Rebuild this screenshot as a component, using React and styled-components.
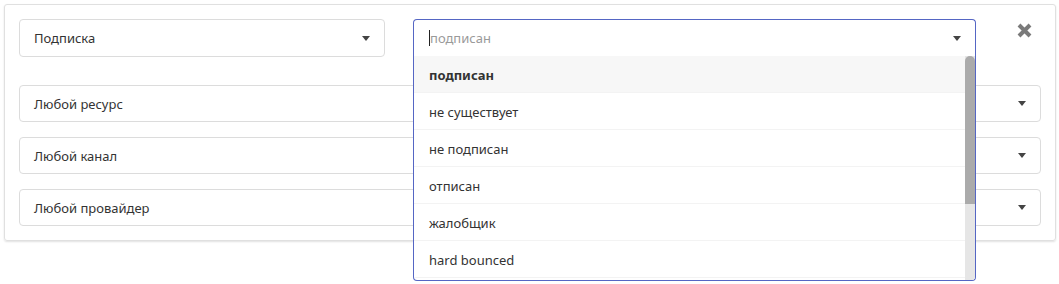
import React from "react";
import styled, { createGlobalStyle } from "styled-components";

const GlobalStyle = createGlobalStyle`
  html, body {
    margin: 0;
    background: #fff;
    font-family: "Noto Sans", "Open Sans", sans-serif;
    color: #333;
  }
`;

const Page = styled.div`
  padding: 4px 3px 0 4px;
  min-height: 284px;
  box-sizing: border-box;
`;

const Card = styled.div`
  border: 1px solid #e0e0e0;
  border-radius: 3px;
  box-shadow: 0 1px 2px rgba(0, 0, 0, 0.12);
  padding: 14px;
  display: flex;
  flex-direction: column;
  gap: 15px;
`;

const TopRow = styled.div`
  display: flex;
  align-items: flex-start;
  margin-bottom: 13px;
`;

const Select = styled.div`
  box-sizing: border-box;
  height: ${(p) => p.h || 38}px;
  width: ${(p) => (p.w ? `${p.w}px` : "auto")};
  flex: none;
  border: 1px solid #dcdcdc;
  border-radius: 4px;
  display: flex;
  align-items: center;
  justify-content: space-between;
  padding: 0 14px;
  font-size: 13px;
  color: #333;
`;

const Arrow = styled.span`
  width: 0;
  height: 0;
  border-left: 4px solid transparent;
  border-right: 4px solid transparent;
  border-top: 5px solid #444;
`;

const Combo = styled.div`
  position: relative;
  width: 563px;
  margin-left: 28px;
  flex: none;
`;

const ComboInput = styled.div`
  box-sizing: border-box;
  height: 37px;
  border: 1px solid #5566c4;
  border-bottom: none;
  border-radius: 4px 4px 0 0;
  display: flex;
  align-items: center;
  justify-content: space-between;
  padding: 0 14px 0 15px;
  font-size: 13px;
`;

const Placeholder = styled.span`
  color: #9a9a9a;
  border-left: 1px solid #222;
  line-height: 16px;
`;

const Menu = styled.div`
  position: absolute;
  top: 37px;
  left: 0;
  right: 0;
  box-sizing: border-box;
  height: 225px;
  overflow: hidden;
  background: #fff;
  border: 1px solid #5566c4;
  border-top: none;
  border-radius: 0 0 4px 4px;
  z-index: 2;
  display: flex;
`;

const List = styled.ul`
  flex: 1;
  margin: 0;
  padding: 0;
  list-style: none;
`;

const Track = styled.div`
  width: 10px;
  flex: none;
  background: #e6e6e6;
  display: flex;
  flex-direction: column;
`;

const Thumb = styled.div`
  height: 148px;
  background: #ababab;
  border-radius: 5px 5px 0 0;
`;

const Option = styled.li`
  box-sizing: border-box;
  height: 37px;
  display: flex;
  align-items: center;
  padding: 1px 0 0 15px;
  font-size: 13px;
  color: #333;
  font-weight: ${(p) => (p.active ? 700 : 400)};
  background: ${(p) => (p.active ? "#f7f7f7" : "#fff")};
  border-bottom: 1px solid #f3f3f3;
`;

const Close = styled.div`
  flex: 1;
  display: flex;
  justify-content: flex-end;
  padding: 3px 8px 0 0;
`;

const options = [
  "подписан",
  "не существует",
  "не подписан",
  "отписан",
  "жалобщик",
  "hard bounced",
];

const Cross = () => (
  <svg width="17" height="17" viewBox="0 0 17 17">
    <path d="M3 3 L14 14 M14 3 L3 14" stroke="#7a7a7a" strokeWidth="4" strokeLinecap="butt" />
  </svg>
);

export default function App() {
  return (
    <>
      <GlobalStyle />
      <Page>
        <Card>
          <TopRow>
            <Select w={366}>
              <span>Подписка</span>
              <Arrow />
            </Select>
            <Combo>
              <ComboInput>
                <Placeholder>подписан</Placeholder>
                <Arrow />
              </ComboInput>
              <Menu>
                <List>
                  {options.map((o, i) => (
                    <Option key={o} active={i === 0}>
                      {o}
                    </Option>
                  ))}
                </List>
                <Track>
                  <Thumb />
                </Track>
              </Menu>
            </Combo>
            <Close>
              <Cross />
            </Close>
          </TopRow>
          <Select h={37}>
            <span>Любой ресурс</span>
            <Arrow />
          </Select>
          <Select h={37}>
            <span>Любой канал</span>
            <Arrow />
          </Select>
          <Select h={37}>
            <span>Любой провайдер</span>
            <Arrow />
          </Select>
        </Card>
      </Page>
    </>
  );
}
